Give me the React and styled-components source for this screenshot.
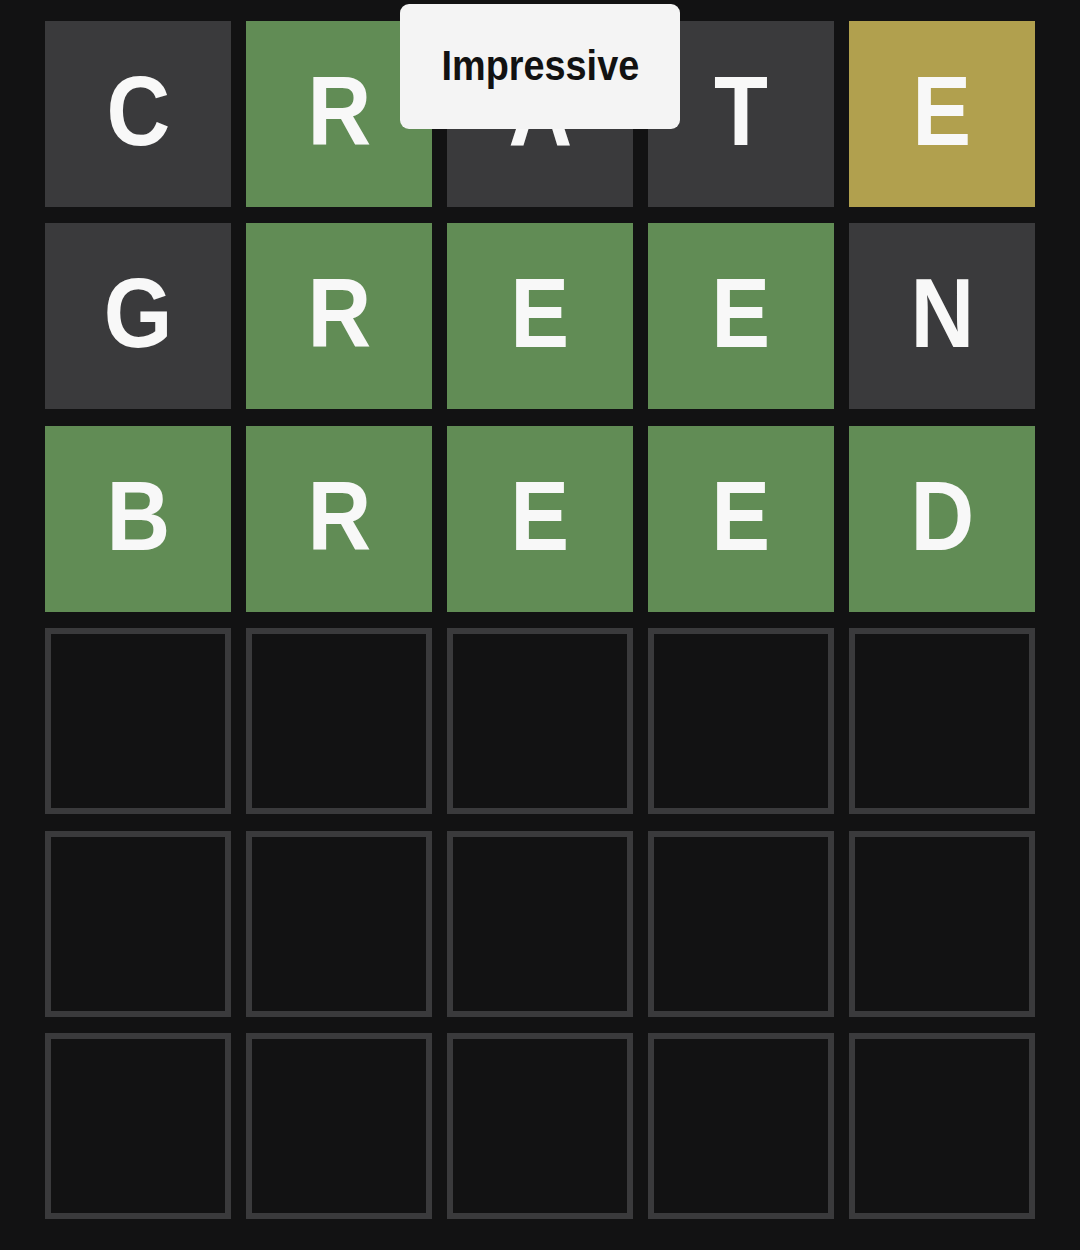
import React from "react";
import styled, { createGlobalStyle } from "styled-components";

const GlobalStyle = createGlobalStyle`
  html, body {
    margin: 0;
    padding: 0;
    background: #121213;
  }
  body {
    font-family: "Liberation Sans", Arial, sans-serif;
  }
`;

const Page = styled.div`
  position: relative;
  display: flex;
  justify-content: center;
  padding-top: 21px;
  min-height: 1250px;
  box-sizing: border-box;
`;

const Board = styled.div`
  display: grid;
  grid-template-columns: repeat(5, 186px);
  grid-auto-rows: 186px;
  column-gap: 15px;
  row-gap: 16.4px;
`;

const colors = {
  correct: "#618c55",
  present: "#b1a04e",
  absent: "#3a3a3c",
};

const Tile = styled.div`
  box-sizing: border-box;
  display: flex;
  align-items: center;
  justify-content: center;
  padding-bottom: 6px;
  background: ${(p) => (p.$state ? colors[p.$state] : "#121213")};
  border: ${(p) => (p.$state ? "none" : "6px solid #3a3a3c")};
  color: #f8f8f8;
  font-size: 98px;
  font-weight: 700;
  line-height: 1;
  text-transform: uppercase;
`;

// the game font is a condensed grotesque; squeeze Liberation Sans to match
const Letter = styled.span`
  display: inline-block;
  transform: scaleX(0.9);
`;

const Toast = styled.div`
  position: absolute;
  top: 4px;
  left: 50%;
  transform: translateX(-50%);
  width: 280px;
  height: 125px;
  box-sizing: border-box;
  display: flex;
  align-items: center;
  justify-content: center;
  padding-bottom: 2px;
  background: #f4f4f4;
  border-radius: 9px;
  color: #121212;
  font-size: 43px;
  font-weight: 700;
`;

const ToastText = styled.span`
  display: inline-block;
  transform: scaleX(0.88);
`;

const guesses = [
  [["C", "absent"], ["R", "correct"], ["A", "absent"], ["T", "absent"], ["E", "present"]],
  [["G", "absent"], ["R", "correct"], ["E", "correct"], ["E", "correct"], ["N", "absent"]],
  [["B", "correct"], ["R", "correct"], ["E", "correct"], ["E", "correct"], ["D", "correct"]],
];

const App = () => {
  const rows = [...guesses];
  while (rows.length < 6) rows.push(Array(5).fill(["", null]));

  return (
    <>
      <GlobalStyle />
      <Page>
        <Board>
          {rows.map((row, r) =>
            row.map(([letter, state], c) => (
              <Tile key={`${r}-${c}`} $state={state}>
                {letter && <Letter>{letter}</Letter>}
              </Tile>
            ))
          )}
        </Board>
        <Toast>
          <ToastText>Impressive</ToastText>
        </Toast>
      </Page>
    </>
  );
};

export default App;
